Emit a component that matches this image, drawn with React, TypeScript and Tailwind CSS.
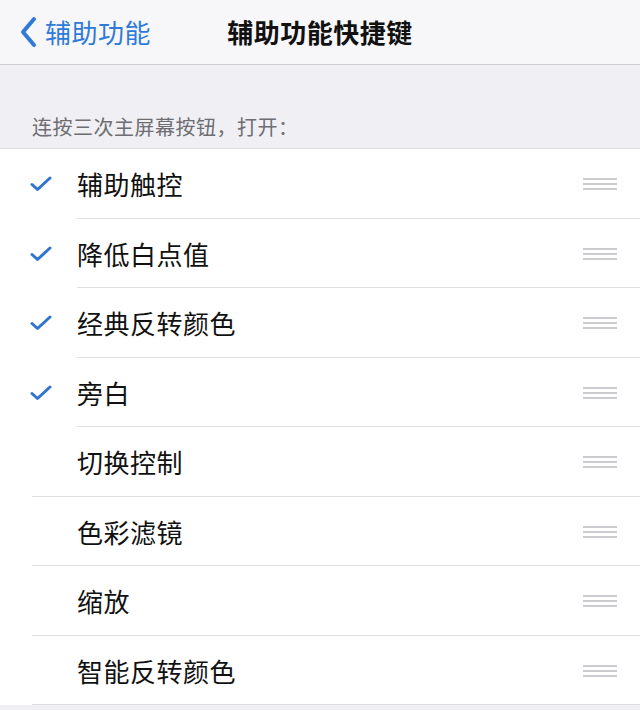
import React from 'react';

const items = [
  { label: '辅助触控', checked: true },
  { label: '降低白点值', checked: true },
  { label: '经典反转颜色', checked: true },
  { label: '旁白', checked: true },
  { label: '切换控制', checked: false },
  { label: '色彩滤镜', checked: false },
  { label: '缩放', checked: false },
  { label: '智能反转颜色', checked: false },
];

function Check() {
  return (
    <svg width="22" height="16" viewBox="0 0 22 16" className="shrink-0">
      <path d="M2 8.5 L7.5 13.5 L20 2" fill="none" stroke="#2f74cf" strokeWidth="3" strokeLinecap="round" strokeLinejoin="round" />
    </svg>
  );
}

function Grip() {
  return (
    <div className="flex flex-col gap-[3px] w-[34px]">
      <div className="h-[2px] bg-[#cbcbd0]" />
      <div className="h-[2px] bg-[#cbcbd0]" />
      <div className="h-[2px] bg-[#cbcbd0]" />
    </div>
  );
}

export default function App() {
  return (
    <div
      className="w-[640px] h-[710px] overflow-hidden bg-[#efeff4] flex flex-col"
      style={{ fontFamily: '"Noto Sans CJK SC", "Noto Sans", sans-serif' }}
    >
      {/* Nav bar */}
      <div className="relative h-[65px] shrink-0 bg-[#f7f7f9] border-b border-[#cfcfd3] flex items-center">
        <div className="flex items-center pl-[19px] text-[#2f7ad8]">
          <svg width="18" height="32" viewBox="0 0 18 32">
            <path d="M15 3 L4 16 L15 29" fill="none" stroke="#2f7ad8" strokeWidth="4" strokeLinecap="round" strokeLinejoin="round" />
          </svg>
          <span className="ml-[8px] text-[26px] leading-none tracking-[0.5px]">辅助功能</span>
        </div>
        <div className="absolute left-0 right-0 top-0 bottom-0 flex items-center justify-center pointer-events-none">
          <span className="text-[26px] font-bold leading-none text-[#111] tracking-[0.5px]">辅助功能快捷键</span>
        </div>
      </div>

      {/* Section header */}
      <div className="h-[84px] shrink-0 flex items-end pl-[32px] pb-[11px] border-b border-[#dcdcdf]">
        <span className="text-[20px] leading-none text-[#6d6d72] tracking-[0.5px]">连按三次主屏幕按钮，打开：</span>
      </div>

      {/* List */}
      <div className="bg-white flex flex-col">
        {items.map((it, i) => (
          <div key={i} className="h-[69.5px] flex flex-col">
            <div className="flex-1 flex items-center pt-[2px]">
              <div className="w-[77px] pl-[30px] flex items-center">{it.checked && <Check />}</div>
              <span className="flex-1 text-[26px] leading-none text-[#111] tracking-[0.5px]">{it.label}</span>
              <div className="pr-[23px]">
                <Grip />
              </div>
            </div>
            <div className={it.checked ? 'h-px ml-[77px] bg-[#dedee0]' : 'h-px ml-[32px] bg-[#dedee0]'} />
          </div>
        ))}
      </div>
    </div>
  );
}
